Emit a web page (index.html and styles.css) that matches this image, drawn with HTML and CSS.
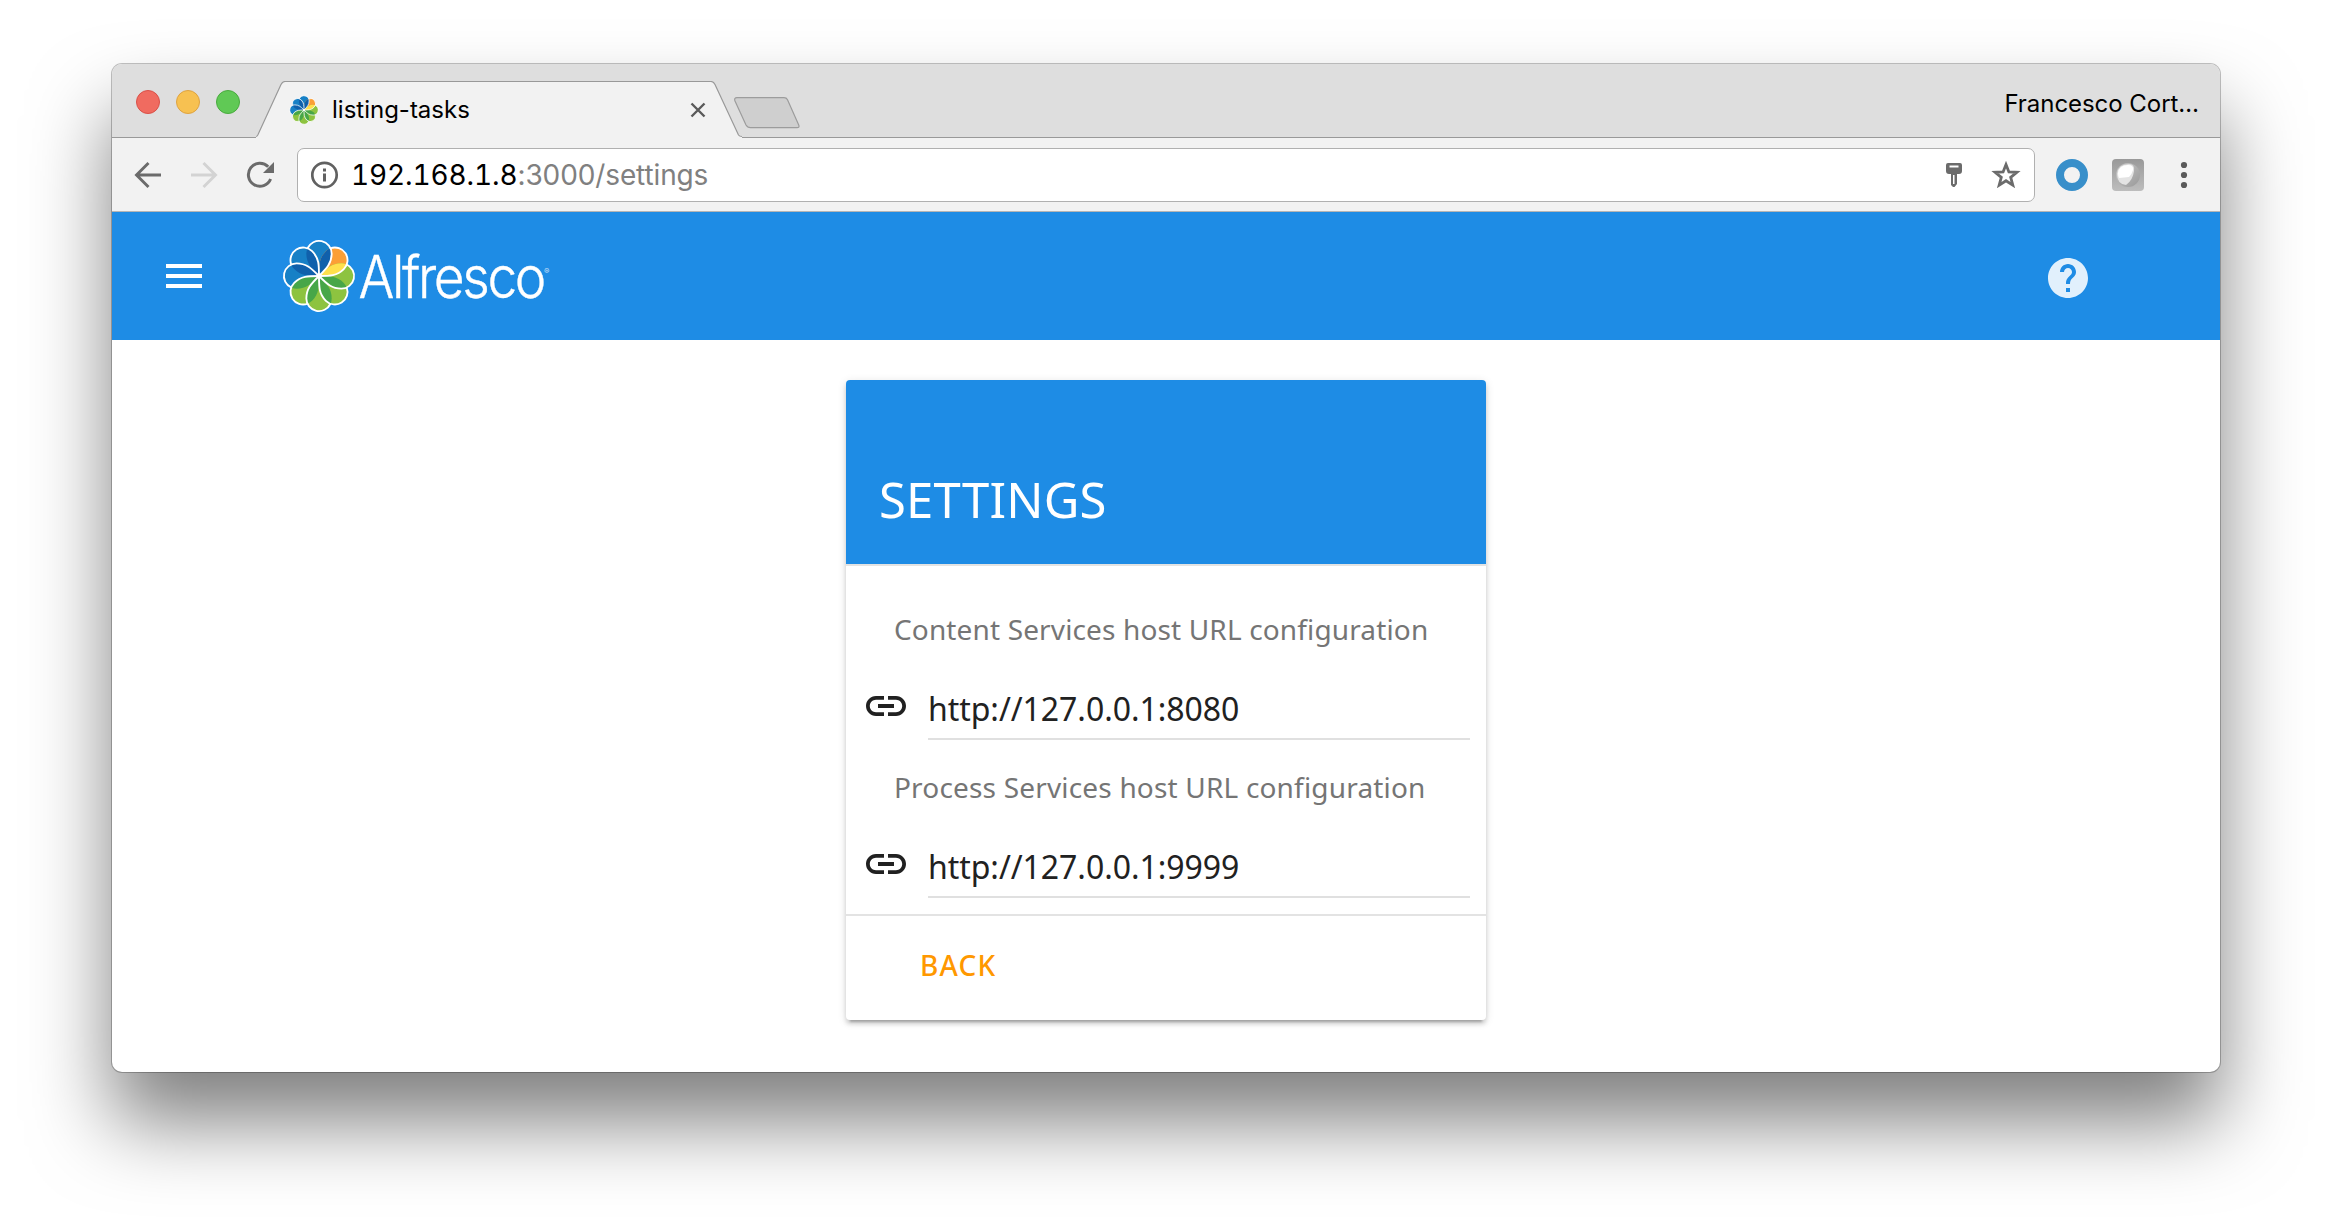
FILE: index.html
```html
<!DOCTYPE html>
<html lang="en">
<head>
<meta charset="utf-8">
<title>listing-tasks</title>
<link rel="stylesheet" href="styles.css">
</head>
<body>
<svg class="defs" width="0" height="0" aria-hidden="true">
  <defs>
    <path id="petal" d="M0 0C8-8 13-13 13-23A13 13 0 0 0-13-23C-13-13-8-8 0 0Z"/>
    <clipPath id="next"><use href="#petal" transform="rotate(45)"/></clipPath>
    <path id="lens" clip-path="url(#next)" d="M0 0C8-8 13-13 13-23A13 13 0 0 0-13-23C-13-13-8-8 0 0Z"/>
    <path id="edge" d="M0 0C8-8 13-13 13-23A13 13 0 0 0-11.8-28.5"/>
    <symbol id="flower" viewBox="-38 -38 76 76">
      <g fill="#1780c6">
        <use href="#petal"/><use href="#petal" transform="rotate(-45)"/><use href="#petal" transform="rotate(-90)"/>
      </g>
      <use href="#petal" transform="rotate(45)" fill="#fb9f36"/>
      <g fill="#8dc340">
        <use href="#petal" transform="rotate(90)"/><use href="#petal" transform="rotate(135)"/><use href="#petal" transform="rotate(180)"/><use href="#petal" transform="rotate(225)"/>
      </g>
      <g fill="#1060ab">
        <use href="#lens"/><use href="#lens" transform="rotate(-45)"/><use href="#lens" transform="rotate(-90)"/>
      </g>
      <use href="#lens" transform="rotate(45)" fill="#ffe04c"/>
      <g fill="#47a648">
        <use href="#lens" transform="rotate(90)"/><use href="#lens" transform="rotate(135)"/><use href="#lens" transform="rotate(180)"/><use href="#lens" transform="rotate(225)"/>
      </g>
      <g class="edges">
        <use href="#edge"/><use href="#edge" transform="rotate(45)"/><use href="#edge" transform="rotate(90)"/><use href="#edge" transform="rotate(135)"/>
        <use href="#edge" transform="rotate(180)"/><use href="#edge" transform="rotate(225)"/><use href="#edge" transform="rotate(270)"/><use href="#edge" transform="rotate(315)"/>
      </g>
      <circle r="2.6" fill="#fff"/>
    </symbol>
    <symbol id="link" viewBox="0 0 24 24">
      <path d="M3.9 12c0-1.71 1.39-3.1 3.1-3.1h4V7H7c-2.76 0-5 2.24-5 5s2.24 5 5 5h4v-1.9H7c-1.71 0-3.1-1.39-3.1-3.1zM8 13h8v-2H8v2zm9-6h-4v1.9h4c1.71 0 3.1 1.39 3.1 3.1s-1.39 3.1-3.1 3.1h-4V17h4c2.76 0 5-2.24 5-5s-2.24-5-5-5z"/>
    </symbol>
  </defs>
</svg>

<div class="window">
  <div class="tabstrip">
    <div class="lights"><i class="light red"></i><i class="light amber"></i><i class="light green"></i></div>
    <div class="tab">
      <svg class="tab-shape" width="486" height="57" viewBox="0 0 486 57">
        <path d="M0 57V55.5L1 55.5L25 3.5Q26.5.5 29 .5H455Q457.500 .5 459 3.500L482.500 54Q483.500 55.500 486 55.500V57Z" fill="#f2f2f2"/>
        <path d="M0 55.5Q1 55.500 1.800 54L25 3.5Q26.5.5 29 .5H455Q457.500 .5 459 3.500L482.500 54Q483.500 55.500 486 55.500" fill="none" stroke="#999" stroke-width="1.2"/>
      </svg>
      <svg class="favicon" width="30" height="30"><use href="#flower"/></svg>
      <span class="tab-title">listing-tasks</span>
      <svg class="close" width="16" height="16" viewBox="0 0 16 16"><path d="M1.500 1.500L14.500 14.500M14.500 1.500L1.500 14.500" stroke="#5a5a5a" stroke-width="2.400"/></svg>
    </div>
    <svg class="newtab" width="66" height="33" viewBox="0 0 66 33"><path d="M3 .7H50Q52.500 .7 53.500 2.700L64.500 27.500Q66 30.700 63 30.700H16.500Q13.500 30.700 12 28L1 4Q-.2 .7 3 .7Z" fill="#cfcfcf" stroke="#9c9c9c" stroke-width="1.200"/></svg>
    <span class="profile">Francesco Cort…</span>
  </div>

  <div class="toolbar">
    <svg class="back" width="28" height="28" viewBox="0 0 28 28"><path d="M27 14H3M14.500 2L2.500 14L14.500 26" fill="none" stroke="#6b6b6b" stroke-width="2.900"/></svg>
    <svg class="forward" width="28" height="28" viewBox="0 0 28 28"><path d="M1 14H25M13.500 2L25.500 14L13.500 26" fill="none" stroke="#d3d3d3" stroke-width="2.900"/></svg>
    <svg class="reload" width="30" height="28" viewBox="0 0 30 28"><path d="M24.600 18A11.500 11.500 0 1 1 22.200 5.800" fill="none" stroke="#6b6b6b" stroke-width="3"/><path d="M28 1V12H17Z" fill="#6b6b6b"/></svg>
    <div class="omnibox">
      <svg width="28" height="28" viewBox="0 0 28 28"><circle cx="13.500" cy="14" r="12.200" fill="none" stroke="#616161" stroke-width="2.700"/><path d="M12 12.500h3V20.500h-3zM12 7.500h3v3h-3z" fill="#616161"/></svg>
      <span class="url"><span class="host">192.168.1.8</span><span class="path">:3000/settings</span></span>
      <svg class="key" width="18" height="26" viewBox="0 0 18 26"><path fill-rule="evenodd" d="M3 1H15Q17 1 17 3V9Q17 12 14 12H12V22L9.500 25H8L6 23V12H4Q1 12 1 9V3Q1 1 3 1ZM4.500 3.500V5.500H13.500V3.500ZM8 13V22H9.500V13Z" fill="#6b6b6b"/></svg>
      <svg class="star" width="30" height="30" viewBox="0 0 30 30"><path d="M15 4.500L17.900 11.900L25.900 12.300L19.700 17.300L21.800 25.100L15 20.700L8.200 25.100L10.300 17.300L4.100 12.300L12.100 11.900Z" fill="none" stroke="#6b6b6b" stroke-width="2.800"/></svg>
    </div>
    <svg class="ring" width="32" height="32" viewBox="0 0 32 32"><circle cx="16" cy="16" r="12" fill="#f2f2f2" stroke="#388fca" stroke-width="8"/></svg>
    <svg class="ext" width="32" height="32" viewBox="0 0 32 32">
      <defs><linearGradient id="g1" x2="0" y2="1"><stop stop-color="#999"/><stop offset="1" stop-color="#bdbdbd"/></linearGradient><linearGradient id="g2" x2="1" y2="1"><stop stop-color="#c9c9c9"/><stop offset="1" stop-color="#999"/></linearGradient></defs>
      <rect width="32" height="32" rx="4" fill="url(#g1)"/><circle cx="16" cy="16" r="12" fill="url(#g2)"/><path d="M5 15Q6 5 17 5Q23 5 22 12Q21 21 14 26Q5 25 5 15Z" fill="#e3e3e3"/><path d="M6 14Q7 6 16 6Q22 6 21 11Q20 15 17 18L7 19Q6 17 6 14Z" fill="#fff"/>
    </svg>
    <svg class="dots" width="8" height="28" viewBox="0 0 8 28"><g fill="#5a5a5a"><circle cx="4" cy="4" r="3.100"/><circle cx="4" cy="14" r="3.100"/><circle cx="4" cy="24" r="3.100"/></g></svg>
  </div>

  <header class="appbar">
    <svg class="menu" width="48" height="48" viewBox="0 0 24 24"><path d="M3 18h18v-2H3v2zm0-5h18v-2H3v2zm0-7v2h18V6H3z" fill="#fff"/></svg>
    <svg class="flower" width="74" height="74"><use href="#flower"/></svg>
    <svg class="wordmark" width="192" height="74" viewBox="0 0 192 74"><text class="brand" transform="translate(.5 58.800) scale(.91 1)">Alfresco</text><text class="reg" x="186" y="35">®</text></svg>
    <svg class="help" width="48" height="48" viewBox="0 0 24 24"><path d="M12 2C6.480 2 2 6.480 2 12s4.480 10 10 10 10-4.480 10-10S17.520 2 12 2zm1 17h-2v-2h2v2zm2.070-7.750l-.9.920C13.450 12.900 13 13.500 13 15h-2v-.5c0-1.100.45-2.100 1.170-2.830l1.240-1.260c.37-.36.59-.86.59-1.410 0-1.100-.9-2-2-2s-2 .9-2 2H8c0-2.210 1.790-4 4-4s4 1.790 4 4c0 .88-.36 1.680-.93 2.250z" fill="#fff" fill-opacity=".87"/></svg>
  </header>

  <main class="page">
    <section class="card">
      <div class="card-title"><h1>SETTINGS</h1></div>
      <div class="card-body">
        <div class="label">Content Services host URL configuration</div>
        <div class="field"><svg width="48" height="48"><use href="#link"/></svg><div class="value">http://127.0.0.1:8080</div></div>
        <div class="label second">Process Services host URL configuration</div>
        <div class="field"><svg width="48" height="48"><use href="#link"/></svg><div class="value">http://127.0.0.1:9999</div></div>
      </div>
      <div class="card-actions"><a class="action">BACK</a></div>
    </section>
  </main>
</div>
</body>
</html>
```
FILE: styles.css
```css
* { box-sizing: border-box; }
body { margin: 0; height: 1232px; overflow: hidden; background: #fff; padding: 64px 112px 0; }
svg { display: block; flex: none; }
.defs { position: absolute; }

.window {
  height: 1008px;
  border-radius: 10px;
  overflow: hidden;
  background: #fff;
  font-family: Inter, "Liberation Sans", sans-serif;
  color: #000;
  box-shadow: 0 0 0 1px rgba(0,0,0,.24), 0 50px 80px rgba(0,0,0,.5);
}

/* Tab strip */
.tabstrip { height: 74px; display: flex; align-items: flex-start; background: #dedede; box-shadow: inset 0 -1px #999; }
.lights { display: flex; gap: 16px; padding: 26px 0 0 24px; width: 144px; }
.light { width: 24px; height: 24px; border-radius: 50%; border: 1px solid; }
.red { background: #f06b60; border-color: #da5048; }
.amber { background: #f7c151; border-color: #dfa340; }
.green { background: #60c955; border-color: #49ab3e; }
.tab { position: relative; display: flex; align-items: center; width: 486px; height: 57px; margin-top: 17px; padding-left: 33px; }
.tab-shape { position: absolute; left: 0; top: 0; }
.favicon { position: relative; }
.tab-title { position: relative; margin-left: 13px; font-size: 24px; line-height: 28px; }
.close { position: relative; margin-left: auto; margin-right: 36px; }
.newtab { margin: 33px 0 0 -8px; }
.profile { margin-left: auto; margin-right: 21px; padding-top: 26px; font-size: 24px; line-height: 28px; letter-spacing: -.05px; }

/* Address toolbar */
.toolbar { height: 74px; display: flex; align-items: center; background: #f2f2f2; border-bottom: 1px solid #b5b5b5; padding-left: 22px; }
.forward { margin-left: 28px; }
.reload { margin-left: 28px; }
.omnibox { display: flex; align-items: center; width: 1738px; height: 54px; margin-left: 21px; padding: 0 13px; background: #fff; border: 1px solid #b0b0b0; border-radius: 7px; }
.url { margin-left: 12px; font-size: 28px; line-height: 36px; letter-spacing: -.12px; white-space: nowrap; }
.host { font-variant-numeric: tabular-nums; }
.path { color: #808080; }
.key { margin-left: auto; }
.star { margin-left: 28px; }
.ring { margin-left: 21px; }
.ext { margin-left: 24px; }
.dots { margin-left: 36px; }

/* Application bar */
.appbar { height: 128px; display: flex; align-items: center; background: #1e8ce5; padding: 0 128px 0 48px; }
.flower { margin-left: 73.500px; }
.edges { fill: none; stroke: #fff; stroke-width: 1.900; }
.wordmark { margin-left: 2px; }
.brand { font: 300 58.500px Inter, sans-serif; letter-spacing: -2.600px; fill: #fff; stroke: #fff; stroke-width: .4px; }
.reg { font: 8px Inter, sans-serif; fill: rgba(255,255,255,.75); }
.help { margin: 4px 0 0 auto; }

/* Settings card */
.page { display: flex; justify-content: center; padding-top: 40px; }
.card {
  width: 640px; height: 640px; border-radius: 4px; overflow: hidden; background: #fff;
  font-family: "Noto Sans", "Open Sans", sans-serif;
  box-shadow: 0 4px 4px rgba(0,0,0,.14), 0 6px 2px -4px rgba(0,0,0,.2), 0 2px 10px rgba(0,0,0,.12);
}
.card-title { height: 186px; display: flex; align-items: flex-end; padding: 0 33px 37px; background: #1e8ce5; border-bottom: 2px solid #e3e3e3; }
h1 { margin: 0; color: #fff; font-weight: 450; font-size: 49px; line-height: 56px; letter-spacing: .2px; }
.card-body { padding: 49px 16px 16px 16px; }
.label { margin: 0 0 39px 32px; color: #757575; font-size: 28px; line-height: 28px; letter-spacing: .14px; white-space: nowrap; }
.label.second { margin-top: 33px; letter-spacing: .18px; }
.field { display: flex; align-items: flex-start; height: 58px; fill: #212121; }
.value { flex: 1; height: 58px; margin-left: 18px; padding-top: 7px; border-bottom: 2px solid #e0e0e0; color: #212121; font-size: 32px; line-height: 40px; letter-spacing: -.05px; }
.card-actions { border-top: 2px solid #e3e3e3; padding: 35px 0 0 74px; }
.action { display: block; color: #ff9800; font-size: 28px; line-height: 28px; font-weight: 500; letter-spacing: 1.200px; }
```
